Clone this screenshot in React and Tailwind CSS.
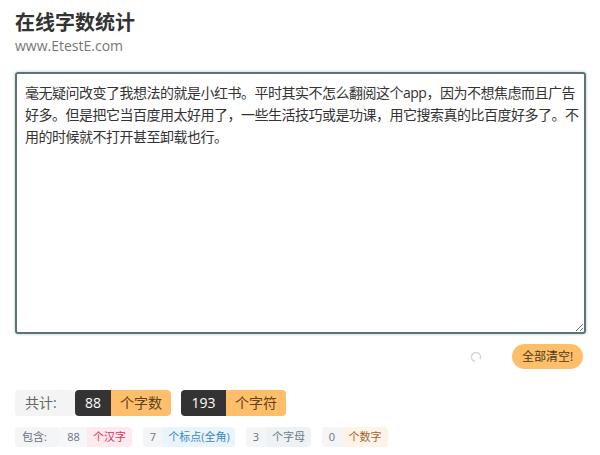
import { useState } from 'react'

// line breaks kept where the page wraps them
const SAMPLE =
  '毫无疑问改变了我想法的就是小红书。平时其实不怎么翻阅这个app，因为不想焦虑而且广告\n' +
  '好多。但是把它当百度用太好用了，一些生活技巧或是功课，用它搜索真的比百度好多了。不\n' +
  '用的时候就不打开甚至卸载也行。'

const font = "font-['Open_Sans','Noto_Sans_CJK_SC',sans-serif]"

// counts as shown by the page
const stats = { words: 88, chars: 193, han: 88, punct: 7, letters: 3, digits: 0 }

// small stat chip: number + label
function Chip({ num, label, labelClass }) {
  return (
    <div className="flex h-5 rounded overflow-hidden text-[11px] leading-5">
      <span className="bg-[#f4f5f6] text-[#6b7280] w-[20px] text-center">{num}</span>
      <span className={`text-center ${labelClass}`}>{label}</span>
    </div>
  )
}

export default function App() {
  const [text, setText] = useState(SAMPLE)

  return (
    <div className={`w-[600px] h-[455px] bg-white px-[15px] pt-[9px] text-[#333] ${font}`}>
      <h1 className="text-[20px] font-bold leading-7 text-[#333]">在线字数统计</h1>
      <div className="text-[14px] leading-5 text-[#777] -mt-[1px]">www.EtestE.com</div>

      <textarea
        value={text}
        onChange={e => setText(e.target.value)}
        className="mt-[16px] block w-[571px] h-[262px] border-2 border-[#5d7477] rounded-[3px] shadow-[0_0_3px_rgba(93,116,119,0.45)] pl-[8px] pr-[2px] py-[8px] text-[14px] leading-[22px] tracking-[-0.5px] text-[#333] outline-none resize-y"
      />

      <div className="flex items-center justify-end gap-[30px] mt-[10px] pr-[2px]">
        <svg width="12" height="12" viewBox="0 0 12 12" className="text-[#d6d6d6]">
          <path d="M6 1.5 A4.5 4.5 0 1 1 1.5 6" fill="none" stroke="currentColor" strokeWidth="1.6" strokeLinecap="round" transform="rotate(200 6 6)" />
        </svg>
        <button
          onClick={() => setText('')}
          className="h-[25px] w-[71px] rounded-full bg-[#ffbf69] text-[12px] text-[#4a3a20] leading-[25px]"
        >
          全部清空!
        </button>
      </div>

      <div className="flex items-center gap-[10px] mt-[21px] text-[14px] leading-[26px]">
        <div className="flex h-[26px] rounded overflow-hidden">
          <span className="bg-[#f4f4f4] text-[#666] pl-[10px] w-[60px]">共计:</span>
          <span className="bg-[#333] text-white w-[36px] text-center rounded-l">{stats.words}</span>
          <span className="bg-[#ffbe69] text-[#5a4322] w-[60px] text-center rounded-r">个字数</span>
        </div>
        <div className="flex h-[26px] rounded overflow-hidden">
          <span className="bg-[#333] text-white w-[45px] text-center">{stats.chars}</span>
          <span className="bg-[#ffbe69] text-[#5a4322] w-[60px] text-center">个字符</span>
        </div>
      </div>

      <div className="flex items-center gap-[11px] mt-[11px]">
        <div className="flex h-5 rounded overflow-hidden text-[11px] leading-5">
          <span className="bg-[#f4f5f6] text-[#6b7280] pl-[7px] w-[45px] rounded-r">包含:</span>
          <span className="bg-[#f6f7f8] text-[#6b7280] w-[27px] text-center">{stats.han}</span>
          <span className="bg-[#fde9ee] text-[#d23a5e] w-[45px] text-center">个汉字</span>
        </div>
        <Chip num={stats.punct} label="个标点(全角)" labelClass="w-[72px] bg-[#eaf4fc] text-[#3b87c4]" />
        <Chip num={stats.letters} label="个字母" labelClass="w-[45px] bg-[#eef2f4] text-[#6a7b86]" />
        <Chip num={stats.digits} label="个数字" labelClass="w-[46px] bg-[#fdf3e7] text-[#9a6630]" />
      </div>
    </div>
  )
}
